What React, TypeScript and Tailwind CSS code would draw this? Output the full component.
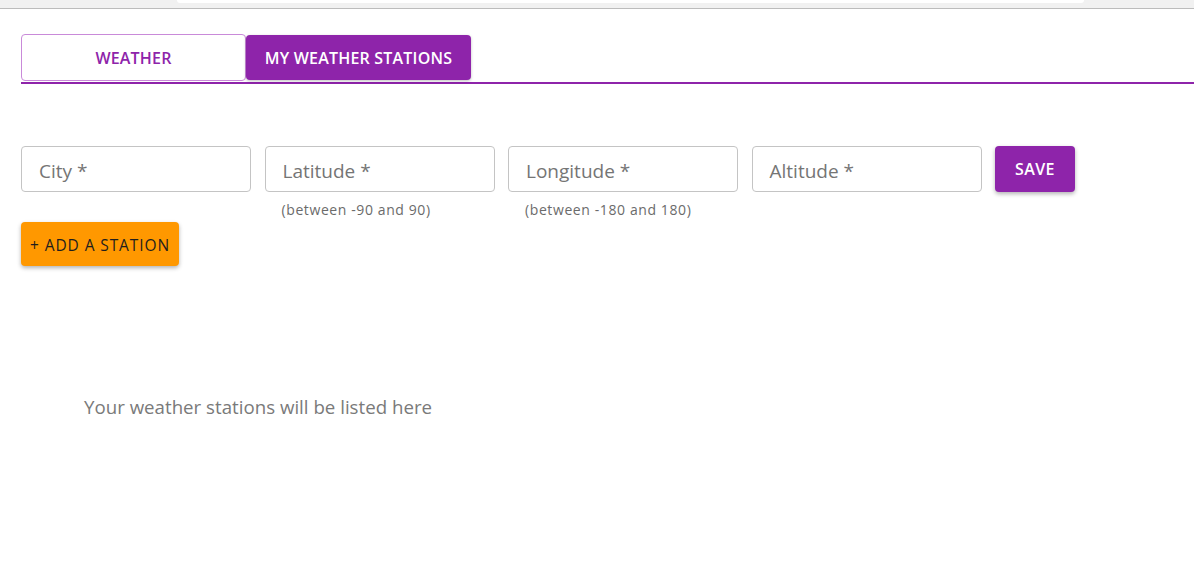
import React from "react";

const font = { fontFamily: '"Open Sans", "Noto Sans", sans-serif' };

function Field({ label, helper }: { label: string; helper?: string }) {
  return (
    <div className="flex flex-col w-[230px] shrink-0">
      <div className="h-[46px] rounded-[4px] border border-[#c4c4c4] flex items-center pl-[17px] pt-[5px] text-[19px] text-[#757575]">
        {label}
      </div>
      {helper ? (
        <div className="pl-[17px] mt-[9px] text-[14px] tracking-[0.6px] text-[#6b6b6b] leading-[18px]">{helper}</div>
      ) : null}
    </div>
  );
}

export default function App() {
  return (
    <div className="w-[1194px] h-[565px] bg-white overflow-hidden" style={font}>
      <div className="h-[9px] bg-[#f1f1f1] border-b border-[#bcbcbc] flex">
        <div className="ml-[177px] w-[907px] h-[3px] bg-white rounded-b-[6px]" />
      </div>
      <div className="pl-[21px] pt-[25px]">
        <div className="flex border-b-2 border-[#8e24aa] items-end">
          <div className="w-[225px] h-[47px] mb-[1px] border border-[#c98ad9] rounded-[4px] flex items-center justify-center text-[#8e24aa] text-[16px] font-semibold tracking-[0.2px]">
            WEATHER
          </div>
          <div className="w-[225px] h-[45px] mb-[2px] bg-[#8e24aa] rounded-[4px] flex items-center justify-center text-white text-[16px] font-semibold tracking-[0.2px] shadow-[0_1px_3px_rgba(0,0,0,0.25)]">
            MY WEATHER STATIONS
          </div>
        </div>
        <div className="flex gap-[13.5px] mt-[62px] items-start">
          <Field label="City *" />
          <Field label="Latitude *" helper="(between -90 and 90)" />
          <Field label="Longitude *" helper="(between -180 and 180)" />
          <Field label="Altitude *" />
          <div className="w-[80px] h-[46px] rounded-[4px] bg-[#8e24aa] text-white text-[16px] font-semibold flex items-center justify-center tracking-[0.4px] shadow-[0_2px_4px_rgba(0,0,0,0.3)]">
            SAVE
          </div>
        </div>
        <div className="mt-[3px] w-[158px] h-[44px] pt-[3px] rounded-[4px] bg-[#ff9800] text-[#1e1e1e] text-[15.5px] font-medium tracking-[0.9px] flex items-center justify-center shadow-[0_2px_4px_rgba(0,0,0,0.3)]">
          + ADD A STATION
        </div>
        <div className="mt-[127px] ml-[63px] text-[18.7px] text-[#7a7a7a]">
          Your weather stations will be listed here
        </div>
      </div>
    </div>
  );
}
